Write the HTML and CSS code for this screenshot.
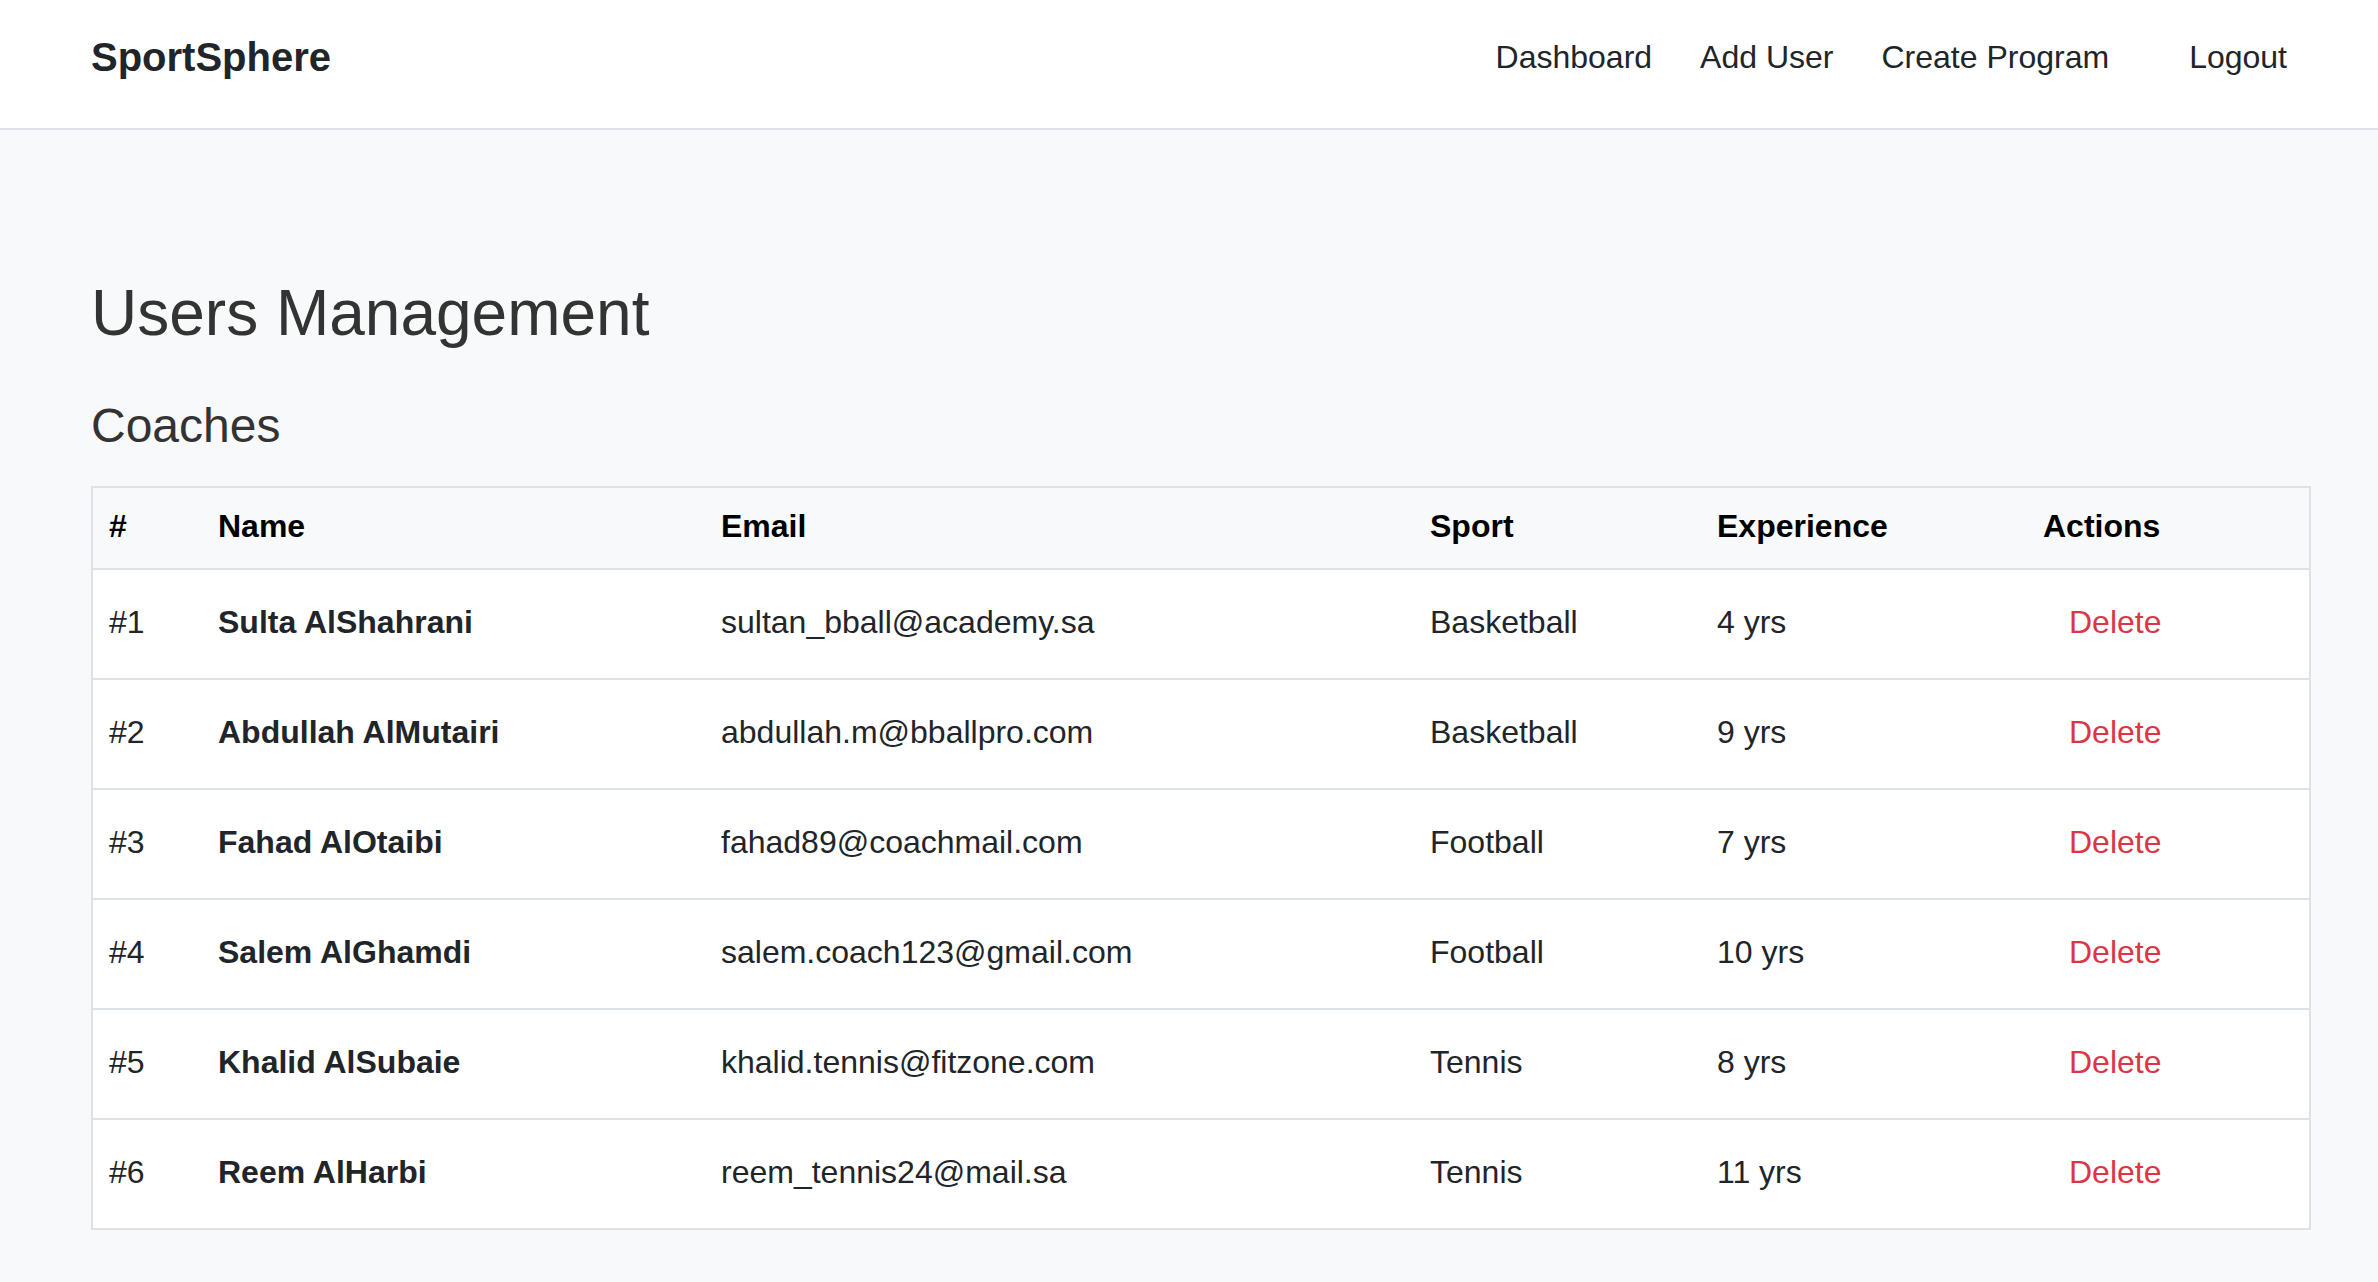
FILE: index.html
```html
<!DOCTYPE html>
<html lang="en">
<head>
<meta charset="utf-8">
<title>SportSphere - Users Management</title>
<link rel="stylesheet" href="styles.css">
</head>
<body>
<header class="topbar">
  <div class="brand">SportSphere</div>
  <nav class="nav">
    <a class="nav-link" href="#">Dashboard</a>
    <a class="nav-link" href="#">Add User</a>
    <a class="nav-link" href="#">Create Program</a>
    <a class="nav-link nav-logout" href="#">Logout</a>
  </nav>
</header>
<main class="content">
  <h1 class="page-title">Users Management</h1>
  <h2 class="section-title">Coaches</h2>
  <table class="users-table">
    <colgroup>
      <col class="c-id">
      <col class="c-name">
      <col class="c-email">
      <col class="c-sport">
      <col class="c-exp">
      <col class="c-act">
    </colgroup>
    <thead>
      <tr><th>#</th><th>Name</th><th>Email</th><th>Sport</th><th>Experience</th><th>Actions</th></tr>
    </thead>
    <tbody>
      <tr><td>#1</td><td class="name">Sulta AlShahrani</td><td>sultan_bball@academy.sa</td><td>Basketball</td><td>4 yrs</td><td><button class="btn-delete">Delete</button></td></tr>
      <tr><td>#2</td><td class="name">Abdullah AlMutairi</td><td>abdullah.m@bballpro.com</td><td>Basketball</td><td>9 yrs</td><td><button class="btn-delete">Delete</button></td></tr>
      <tr><td>#3</td><td class="name">Fahad AlOtaibi</td><td>fahad89@coachmail.com</td><td>Football</td><td>7 yrs</td><td><button class="btn-delete">Delete</button></td></tr>
      <tr><td>#4</td><td class="name">Salem AlGhamdi</td><td>salem.coach123@gmail.com</td><td>Football</td><td>10 yrs</td><td><button class="btn-delete">Delete</button></td></tr>
      <tr><td>#5</td><td class="name">Khalid AlSubaie</td><td>khalid.tennis@fitzone.com</td><td>Tennis</td><td>8 yrs</td><td><button class="btn-delete">Delete</button></td></tr>
      <tr><td>#6</td><td class="name">Reem AlHarbi</td><td>reem_tennis24@mail.sa</td><td>Tennis</td><td>11 yrs</td><td><button class="btn-delete">Delete</button></td></tr>
    </tbody>
  </table>
</main>
</body>
</html>
```
FILE: styles.css
```css
* { box-sizing: border-box; }

body {
  margin: 0;
  background: #f8f9fa;
  color: #212529;
  font-family: "Liberation Sans", Arial, Helvetica, sans-serif;
}

.topbar {
  height: 130px;
  background: #ffffff;
  border-bottom: 2px solid #dee2e6;
  display: flex;
  align-items: center;
  justify-content: space-between;
  padding: 0 67px 14px 91px;
}

.brand {
  font-size: 40px;
  line-height: 46px;
  font-weight: 700;
  color: #212529;
}

.nav {
  display: flex;
  align-items: center;
}

.nav-link {
  font-size: 32px;
  line-height: 37px;
  color: #212529;
  text-decoration: none;
  padding: 0 24px;
}

.nav-logout {
  margin-left: 32px;
}

.content {
  padding: 0 67px 0 91px;
}

.page-title {
  margin: 146px 0 0;
  font-size: 64px;
  line-height: 74px;
  font-weight: 400;
  color: #333333;
}

.section-title {
  margin: 48px 0 0;
  font-size: 48px;
  line-height: 55px;
  font-weight: 400;
  color: #333333;
}

.users-table {
  margin-top: 33px;
  width: 100%;
  border-collapse: collapse;
  table-layout: fixed;
  border: 2px solid #dee2e6;
  font-size: 32px;
}

.c-id { width: 110px; }
.c-name { width: 503px; }
.c-email { width: 709px; }
.c-sport { width: 287px; }
.c-exp { width: 326px; }

.users-table thead tr {
  background: #f8f9fa;
}

.users-table th {
  text-align: left;
  font-weight: 700;
  color: #000000;
  line-height: 36px;
  padding: 20px 16px 24px;
  border-bottom: 2px solid #dee2e6;
}

.users-table tbody tr {
  background: #ffffff;
}

.users-table td {
  line-height: 36px;
  padding: 34px 16px 38px;
  border-bottom: 2px solid #dee2e6;
  color: #212529;
  white-space: nowrap;
}

.users-table td.name {
  font-weight: 700;
}

.btn-delete {
  display: inline-block;
  font-family: inherit;
  font-size: 32px;
  line-height: 36px;
  color: #dc3545;
  background: none;
  border: none;
  padding: 0 26px;
  margin: 0;
  cursor: pointer;
  vertical-align: top;
}
```
